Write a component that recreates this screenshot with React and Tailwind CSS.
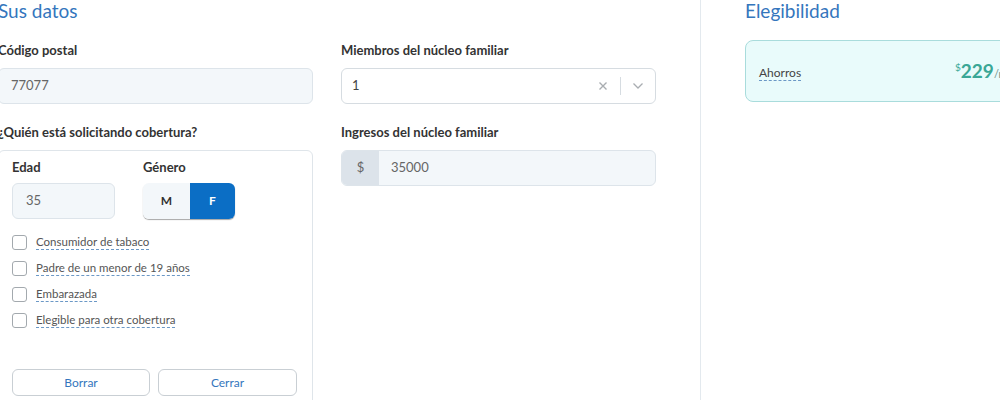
import React from 'react';

const labelCls = "block text-[13px] leading-4 font-bold text-[#333]";

function Check({ label }) {
    return (
        <label className="flex items-center h-[26px]">
            <span className="w-[15px] h-[15px] border border-[#a3a9ae] rounded-[3px] bg-white shrink-0" />
            <span className="ml-[9px] text-[11.5px] leading-[14px] text-[#555] border-b border-dashed border-[#6b98c6]">
                {label}
            </span>
        </label>
    );
}

export default function App() {
    return (
        <div className="w-[1000px] h-[400px] overflow-hidden bg-white flex font-['Lato','Open_Sans',sans-serif]">
            <div className="w-[703px] shrink-0 ml-[-2px] border-r border-[#e3e9ee]">
                <h2 className="text-[19px] leading-6 text-[#3476bd] mt-[-1px]">Sus datos</h2>
                <div className="grid grid-cols-[315px_315px] gap-x-7 mt-[19px]">
                    <div>
                        <span className={labelCls}>Código postal</span>
                        <div className="mt-[10px] h-9 bg-[#f3f7fa] border border-[#dde4ea] rounded-md flex items-center pl-[12px] text-[13px] text-[#666]">
                            77077
                        </div>
                        <span className={labelCls + " mt-5"}>¿Quién está solicitando cobertura?</span>
                        <div className="mt-[10px] border border-[#dfe5ea] rounded-md px-[13px] pt-2 pb-4">
                            <div className="flex">
                                <div className="w-[131px]">
                                    <span className={labelCls}>Edad</span>
                                    <div className="mt-2 w-[103px] h-9 bg-[#f3f7fa] border border-[#dde4ea] rounded-md flex items-center pl-[13px] text-[13px] text-[#666]">
                                        35
                                    </div>
                                </div>
                                <div>
                                    <span className={labelCls}>Género</span>
                                    <div className="mt-2 flex h-9 w-[92px] rounded-md overflow-hidden shadow-[0_1px_1px_rgba(0,0,0,0.35)]">
                                        <button className="w-[47px] bg-[#f3f7fa] text-[12px] font-bold text-[#333]">M</button>
                                        <button className="flex-1 bg-[#0b6ec5] text-[12px] font-bold text-white">F</button>
                                    </div>
                                </div>
                            </div>
                            <div className="mt-[10px]">
                                <Check label="Consumidor de tabaco" />
                                <Check label="Padre de un menor de 19 años" />
                                <Check label="Embarazada" />
                                <Check label="Elegible para otra cobertura" />
                            </div>
                            <div className="mt-9 flex gap-2">
                                <button className="w-[138px] h-[27px] border border-[#c9cfd4] rounded-md text-[12px] text-[#3476bd]">Borrar</button>
                                <button className="w-[139px] h-[27px] border border-[#c9cfd4] rounded-md text-[12px] text-[#3476bd]">Cerrar</button>
                            </div>
                        </div>
                    </div>
                    <div>
                        <span className={labelCls}>Miembros del núcleo familiar</span>
                        <div className="mt-[10px] h-9 bg-white border border-[#d6dce1] rounded-md flex items-center pl-[10px] text-[13px] text-[#444]">
                            <span className="flex-1">1</span>
                            <svg width="10" height="10" viewBox="0 0 10 10" className="mr-[12px]">
                                <path d="M1.5 1.5 L8.5 8.5 M8.5 1.5 L1.5 8.5" stroke="#a9adb1" strokeWidth="1.4" />
                            </svg>
                            <span className="w-px h-[18px] bg-[#d6dce1]" />
                            <svg width="12" height="8" viewBox="0 0 12 8" className="mx-[11px]">
                                <path d="M1.5 1.5 L6 6 L10.5 1.5" stroke="#a9adb1" strokeWidth="1.3" fill="none" />
                            </svg>
                        </div>
                        <span className={labelCls + " mt-5"}>Ingresos del núcleo familiar</span>
                        <div className="mt-[10px] h-9 bg-[#f3f7fa] border border-[#dde4ea] rounded-md flex overflow-hidden text-[13px] text-[#666]">
                            <span className="w-[37px] bg-[#dce3ea] flex items-center justify-center">$</span>
                            <span className="flex items-center pl-3">35000</span>
                        </div>
                    </div>
                </div>
            </div>
            <div className="pl-[44px] shrink-0">
                <h2 className="text-[19px] leading-6 text-[#3476bd] mt-[-1px]">Elegibilidad</h2>
                <div className="mt-[17px] w-[320px] h-[62px] bg-[#e9fbfb] border border-[#a9dcdc] rounded-lg flex items-center pl-[13px]">
                    <span className="w-[196px]">
                        <span className="text-[12px] leading-[15px] text-[#444] border-b border-dashed border-[#6b98c6]">Ahorros</span>
                    </span>
                    <span className="flex items-baseline text-[#3aa796]">
                        <span className="text-[10px] self-start mt-[1px]">$</span>
                        <span className="text-[19px] font-bold leading-6">229</span>
                        <span className="text-[11px] text-[#6c8f8a]">/mes</span>
                    </span>
                </div>
            </div>
        </div>
    );
}
